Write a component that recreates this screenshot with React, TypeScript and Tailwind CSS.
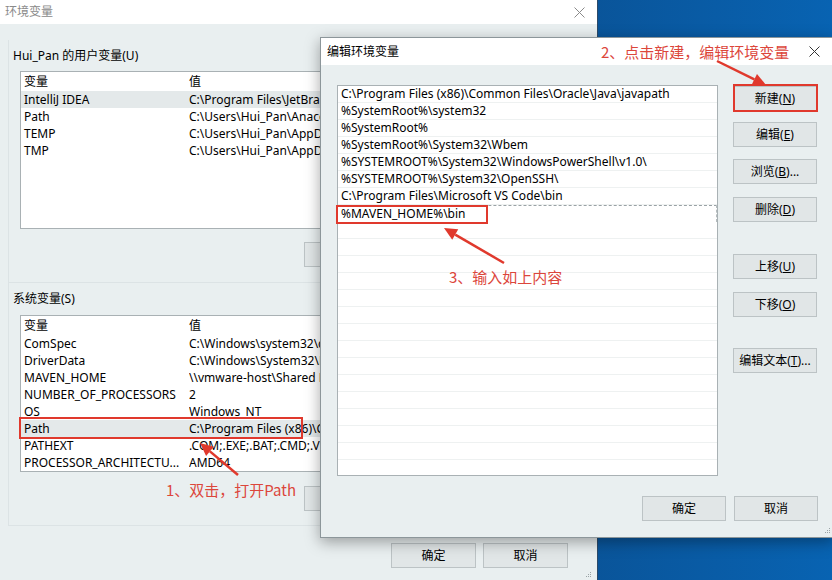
import React from "react";

const userVars: [string, string][] = [
  ["IntelliJ IDEA", "C:\\Program Files\\JetBrains\\IntelliJ IDEA 2019.3.3\\bin;"],
  ["Path", "C:\\Users\\Hui_Pan\\Anaconda3;C:\\Users\\Hui_Pan\\Anaconda3\\Library\\bin"],
  ["TEMP", "C:\\Users\\Hui_Pan\\AppData\\Local\\Temp"],
  ["TMP", "C:\\Users\\Hui_Pan\\AppData\\Local\\Temp"],
];

const sysVars: [string, string][] = [
  ["ComSpec", "C:\\Windows\\system32\\cmd.exe"],
  ["DriverData", "C:\\Windows\\System32\\Drivers\\DriverData"],
  ["MAVEN_HOME", "\\\\vmware-host\\Shared Folders\\apache-maven-3.6.3"],
  ["NUMBER_OF_PROCESSORS", "2"],
  ["OS", "Windows_NT"],
  ["Path", "C:\\Program Files (x86)\\Common Files\\Oracle\\Java\\javapath;"],
  ["PATHEXT", ".COM;.EXE;.BAT;.CMD;.VBS;.VBE;.JS;.JSE;.WSF;.WSH;.MSC"],
  ["PROCESSOR_ARCHITECTU...", "AMD64"],
];

const pathItems = [
  "C:\\Program Files (x86)\\Common Files\\Oracle\\Java\\javapath",
  "%SystemRoot%\\system32",
  "%SystemRoot%",
  "%SystemRoot%\\System32\\Wbem",
  "%SYSTEMROOT%\\System32\\WindowsPowerShell\\v1.0\\",
  "%SYSTEMROOT%\\System32\\OpenSSH\\",
  "C:\\Program Files\\Microsoft VS Code\\bin",
];

const Btn = ({ children, className = "" }: { children: React.ReactNode; className?: string }) => (
  <div className={`h-[25px] shrink-0 flex items-center justify-center bg-[#e1e6e7] border border-[#bcc3c5] text-[12px] text-black ${className}`}>
    {children}
  </div>
);

const Close = ({ color }: { color: string }) => (
  <svg width="11" height="11" viewBox="0 0 11 11">
    <path d="M0.5 0.5 L10.5 10.5 M10.5 0.5 L0.5 10.5" stroke={color} strokeWidth="1" />
  </svg>
);

const Grip = () => (
  <svg width="6" height="7" viewBox="0 0 6 7">
    <rect x="4" y="0" width="1" height="1" fill="#9aa3a6" />
    <rect x="2" y="2" width="1" height="1" fill="#9aa3a6" />
    <rect x="4" y="2" width="1" height="1" fill="#9aa3a6" />
    <rect x="0" y="4" width="1" height="1" fill="#9aa3a6" />
    <rect x="2" y="4" width="1" height="1" fill="#9aa3a6" />
    <rect x="4" y="4" width="1" height="1" fill="#9aa3a6" />
  </svg>
);

// list of name / value pairs; the part past x=320 sits under the edit dialog anyway
const VarList = ({ rows, selected, height }: { rows: [string, string][]; selected: number; height: number }) => (
  <div className="ml-[11px] w-[560px] bg-white border border-[#a9b1b4] overflow-hidden" style={{ height }}>
    <div className="h-[19px] flex items-center text-[12px] text-black">
      <span className="w-[168px] pl-[3px]">变量</span>
      <span>值</span>
    </div>
    {rows.map(([k, v], i) => (
      <div key={i} className={`h-[17px] flex items-center text-[12px] text-black whitespace-nowrap ${i === selected ? "bg-[#e4e9ea]" : ""}`}>
        <span className="w-[168px] pl-[3px] shrink-0">{k}</span>
        <span className="w-[132px] overflow-hidden">{v}</span>
      </div>
    ))}
  </div>
);

const Arrow = ({ x1, y1, x2, y2 }: { x1: number; y1: number; x2: number; y2: number }) => {
  const dx = x2 - x1;
  const dy = y2 - y1;
  const len = Math.hypot(dx, dy);
  const ux = dx / len;
  const uy = dy / len;
  const hl = 13;
  const hw = 6;
  const bx = x2 - ux * hl;
  const by = y2 - uy * hl;
  const pts = `${x2},${y2} ${bx - uy * hw},${by + ux * hw} ${bx + uy * hw},${by - ux * hw}`;
  return (
    <g>
      <line x1={x1} y1={y1} x2={bx} y2={by} stroke="#e0392d" strokeWidth="2.5" />
      <polygon points={pts} fill="#e0392d" />
    </g>
  );
};

export default function App() {
  return (
    <div className="relative w-[832px] h-[580px] overflow-hidden bg-gradient-to-r from-[#0a3361] via-[#0a4a88] to-[#0863b2] font-['Segoe_UI','Noto_Sans','Noto_Sans_CJK_SC',sans-serif]">
      {/* main dialog */}
      <div className="relative w-[598px] h-[600px] bg-[#e9eff0] border-r border-[#2d4a68] flex flex-col">
        <div className="h-[24px] bg-white flex items-center justify-between pl-[5px] pr-[12px]">
          <span className="text-[12px] text-[#8a8a8a]">环境变量</span>
          <Close color="#8a8a8a" />
        </div>

        <div className="ml-[8px] mt-[16px] mr-[8px] border-l border-r border-b border-[#dce3e5] pt-[8px] pb-[15px]">
          <div className="h-[16px] pl-[4px] flex items-center text-[12px] text-black">Hui_Pan 的用户变量(U)</div>
          <div className="mt-[7px]">
            <VarList rows={userVars} selected={0} height={158} />
          </div>
          <div className="mt-[13px] flex gap-[7px] pl-[295px]">
            <Btn className="w-[84px]"> </Btn>
            <Btn className="w-[84px]"> </Btn>
            <Btn className="w-[84px]"> </Btn>
          </div>
        </div>

        <div className="ml-[8px] mr-[8px] border-l border-r border-b border-[#dce3e5] pt-[8px] pb-[14px]">
          <div className="h-[16px] pl-[4px] flex items-center text-[12px] text-black">系统变量(S)</div>
          <div className="mt-[8px]">
            <VarList rows={sysVars} selected={5} height={157} />
          </div>
          <div className="mt-[14px] flex gap-[7px] pl-[295px]">
            <Btn className="w-[84px]"> </Btn>
            <Btn className="w-[84px]"> </Btn>
            <Btn className="w-[84px]"> </Btn>
          </div>
        </div>

        <div className="mt-[17px] flex justify-end gap-[7px] pr-[29px]">
          <Btn className="w-[85px]">确定</Btn>
          <Btn className="w-[85px]">取消</Btn>
        </div>
        <div className="absolute left-[586px] top-[572px]">
          <Grip />
        </div>
      </div>

      {/* edit dialog */}
      <div className="absolute left-[320px] top-[37px] w-[514px] h-[501px] bg-[#e9eff0] border border-[#8c969a] shadow-[0_4px_14px_rgba(0,0,0,0.35)] flex flex-col">
        <div className="h-[27px] bg-white flex items-center justify-between pl-[6px] pr-[13px]">
          <span className="text-[12px] text-black">编辑环境变量</span>
          <Close color="#333" />
        </div>
        <div className="flex px-[16px] pt-[20px]">
          <div className="w-[382px] h-[391px] bg-white border border-[#a9b1b4] overflow-hidden">
            {Array.from({ length: 23 }).map((_, i) => {
              const text = pathItems[i];
              if (i === pathItems.length) {
                return (
                  <div key={i} className="h-[17px] flex items-center text-[12px] text-black border-t border-dashed border-[#9aa2a5] border-r border-r-[#b5bcbe] pl-[3px]">
                    %MAVEN_HOME%\bin
                  </div>
                );
              }
              return (
                <div key={i} className="h-[17px] flex items-center text-[12px] text-black border-b border-[#eef1f1] pl-[3px] whitespace-nowrap">
                  {text ?? ""}
                </div>
              );
            })}
          </div>
          <div className="ml-[15px] pt-[1px] flex flex-col">
            <Btn className="w-[84px]">新建(<span className="underline">N</span>)</Btn>
            <Btn className="w-[84px] mt-[11px]">编辑(<span className="underline">E</span>)</Btn>
            <Btn className="w-[84px] mt-[12px]">浏览(<span className="underline">B</span>)...</Btn>
            <Btn className="w-[84px] mt-[13px]">删除(<span className="underline">D</span>)</Btn>
            <Btn className="w-[84px] mt-[32px]">上移(<span className="underline">U</span>)</Btn>
            <Btn className="w-[84px] mt-[13px]">下移(<span className="underline">O</span>)</Btn>
            <Btn className="w-[84px] mt-[31px]">编辑文本(<span className="underline">T</span>)...</Btn>
          </div>
        </div>
        <div className="mt-[20px] flex justify-end gap-[8px] pr-[15px]">
          <Btn className="w-[84px] border-[#2b7fd0]">确定</Btn>
          <Btn className="w-[84px]">取消</Btn>
        </div>
        <div className="absolute right-[2px] bottom-[2px]">
          <Grip />
        </div>
      </div>

      {/* annotations */}
      <svg className="absolute inset-0 pointer-events-none" width="832" height="580" viewBox="0 0 832 580">
        <rect x="20" y="418" width="282" height="20" fill="none" stroke="#e0392d" strokeWidth="2" />
        <rect x="734" y="85" width="83" height="26" fill="none" stroke="#e0392d" strokeWidth="2" />
        <rect x="337" y="206" width="150" height="17" fill="none" stroke="#e0392d" strokeWidth="2" />
        <Arrow x1={238} y1={475} x2={200} y2={443} />
        <Arrow x1={717} y1={61} x2={766} y2={85} />
        <Arrow x1={504} y1={263} x2={444} y2={228} />
      </svg>
      <span className="absolute left-[166px] top-[480px] text-[15px] leading-[20px] text-[#dc463b] font-['Noto_Sans_CJK_SC',sans-serif]">1、双击，打开Path</span>
      <span className="absolute left-[601px] top-[42px] text-[15px] leading-[20px] text-[#dc463b] font-['Noto_Sans_CJK_SC',sans-serif]">2、点击新建，编辑环境变量</span>
      <span className="absolute left-[449px] top-[267px] text-[15px] leading-[20px] text-[#dc463b] font-['Noto_Sans_CJK_SC',sans-serif]">3、输入如上内容</span>
    </div>
  );
}
